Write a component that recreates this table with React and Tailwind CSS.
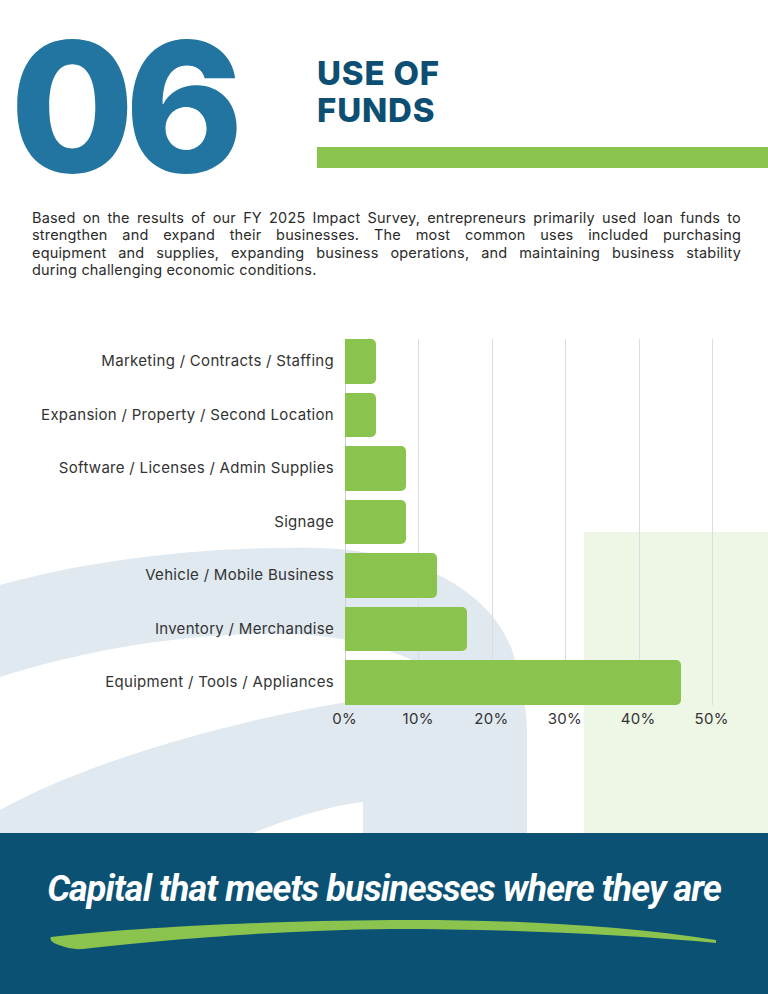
import React from "react";

const rows = [
  { label: "Marketing / Contracts / Staffing", value: 4.17 },
  { label: "Expansion / Property / Second Location", value: 4.17 },
  { label: "Software / Licenses / Admin Supplies", value: 8.33 },
  { label: "Signage", value: 8.33 },
  { label: "Vehicle / Mobile Business", value: 12.5 },
  { label: "Inventory / Merchandise", value: 16.67 },
  { label: "Equipment / Tools / Appliances", value: 45.83 },
];

const ticks = ["0%", "10%", "20%", "30%", "40%", "50%"];

// 73.4px per 10% on the axis
const PX_PER_PCT = 7.34;

function Backdrop() {
  return (
    <svg
      className="absolute left-0 top-0 pointer-events-none"
      width="768"
      height="833"
      viewBox="0 0 768 833"
    >
      <path
        d="M0,585 C90,560 200,546 320,548 C430,552 500,600 515,660 C522,690 527,710 527,730 L527,833 L0,833 Z"
        fill="#dfe9ef"
      />
      <path
        d="M0,677 C80,652 180,632 290,634 C350,636 400,650 440,675 C400,690 370,697 347,702 C250,718 100,755 0,810 Z"
        fill="#ffffff"
      />
      <path d="M253,833 C290,818 330,806 363,802 L363,833 Z" fill="#ffffff" />
      <rect x="584" y="532" width="184" height="301" fill="#eef6e6" />
    </svg>
  );
}

export default function App() {
  return (
    <div
      className="relative w-[768px] h-[994px] overflow-hidden bg-white flex flex-col"
      style={{ fontFamily: "Inter, 'Open Sans', sans-serif" }}
    >
      <Backdrop />

      {/* header */}
      <div className="relative flex">
        <div className="w-[317px] shrink-0 pt-[42px] pl-[10px]">
          <div className="text-[180px] leading-[130px] font-extrabold tracking-[-0.055em] text-[#2275a0]">
            06
          </div>
        </div>
        <div className="flex-1 pt-[55px]">
          <h1 className="text-[33px] leading-[37px] font-extrabold tracking-[0.025em] text-[#0d4f72]">
            USE OF
            <br />
            FUNDS
          </h1>
          <div className="mt-[18px] h-[21px] bg-[#8bc34f]" />
        </div>
      </div>

      {/* intro */}
      <div className="relative mt-[37px] ml-[32px] w-[709px] text-[14.5px] leading-[17.3px] tracking-[0.012em] text-[#2b2b2b]">
        <p className="text-justify [text-align-last:justify]">
          Based on the results of our FY 2025 Impact Survey, entrepreneurs primarily used loan funds to
        </p>
        <p className="text-justify [text-align-last:justify]">
          strengthen and expand their businesses. The most common uses included purchasing
        </p>
        <p className="text-justify [text-align-last:justify]">
          equipment and supplies, expanding business operations, and maintaining business stability
        </p>
        <p>during challenging economic conditions.</p>
      </div>

      {/* chart */}
      <div className="relative mt-[61px] flex">
        <div className="w-[334px] flex flex-col gap-[9px]">
          {rows.map((r) => (
            <div
              key={r.label}
              className="h-[44.5px] flex items-center justify-end text-[15px] tracking-[0.02em] text-[#333333] whitespace-nowrap"
            >
              {r.label}
            </div>
          ))}
        </div>
        <div className="relative ml-[11px] w-[368px]">
          <div className="absolute inset-0 flex">
            <div className="w-[73.4px] border-l border-[#cfcfcf]" />
            <div className="w-[73.4px] border-l border-[#dcdcdc]" />
            <div className="w-[73.4px] border-l border-[#dcdcdc]" />
            <div className="w-[73.4px] border-l border-[#dcdcdc]" />
            <div className="w-[73.4px] border-l border-[#dcdcdc]" />
            <div className="w-px bg-[#dcdcdc]" />
          </div>
          <div className="relative flex flex-col gap-[9px]">
            {rows.map((r) => (
              <div
                key={r.label}
                className="h-[44.5px] rounded-r-[5px] bg-[#8bc34f]"
                style={{ width: `${r.value * PX_PER_PCT}px` }}
              />
            ))}
          </div>
        </div>
      </div>

      <div className="relative mt-[5px] ml-[308px] flex text-[15px] leading-[17px] tracking-[0.02em] text-[#333333]">
        {ticks.map((t) => (
          <div key={t} className="w-[73.4px] text-center">
            {t}
          </div>
        ))}
      </div>

      {/* banner */}
      <div className="relative mt-auto h-[161px] bg-[#0b5174] flex flex-col items-center">
        <div
          className="mt-[36px] text-[36px] leading-[40px] font-bold italic tracking-tight text-white"
          style={{ fontFamily: "Roboto, 'Open Sans', sans-serif" }}
        >
          Capital that meets businesses where they are
        </div>
        <svg
          className="block mt-[6px]"
          width="768"
          height="40"
          viewBox="0 915 768 40"
        >
          <path
            d="M51,937 C120,929 250,921 392,920 C500,919 620,925 716,940 L716,943 C620,934 500,929 392,929 C280,930 160,940 83,949 C72,950 60,946 54,943 Q49,940 51,937 Z"
            fill="#8bc34f"
          />
        </svg>
      </div>
    </div>
  );
}
